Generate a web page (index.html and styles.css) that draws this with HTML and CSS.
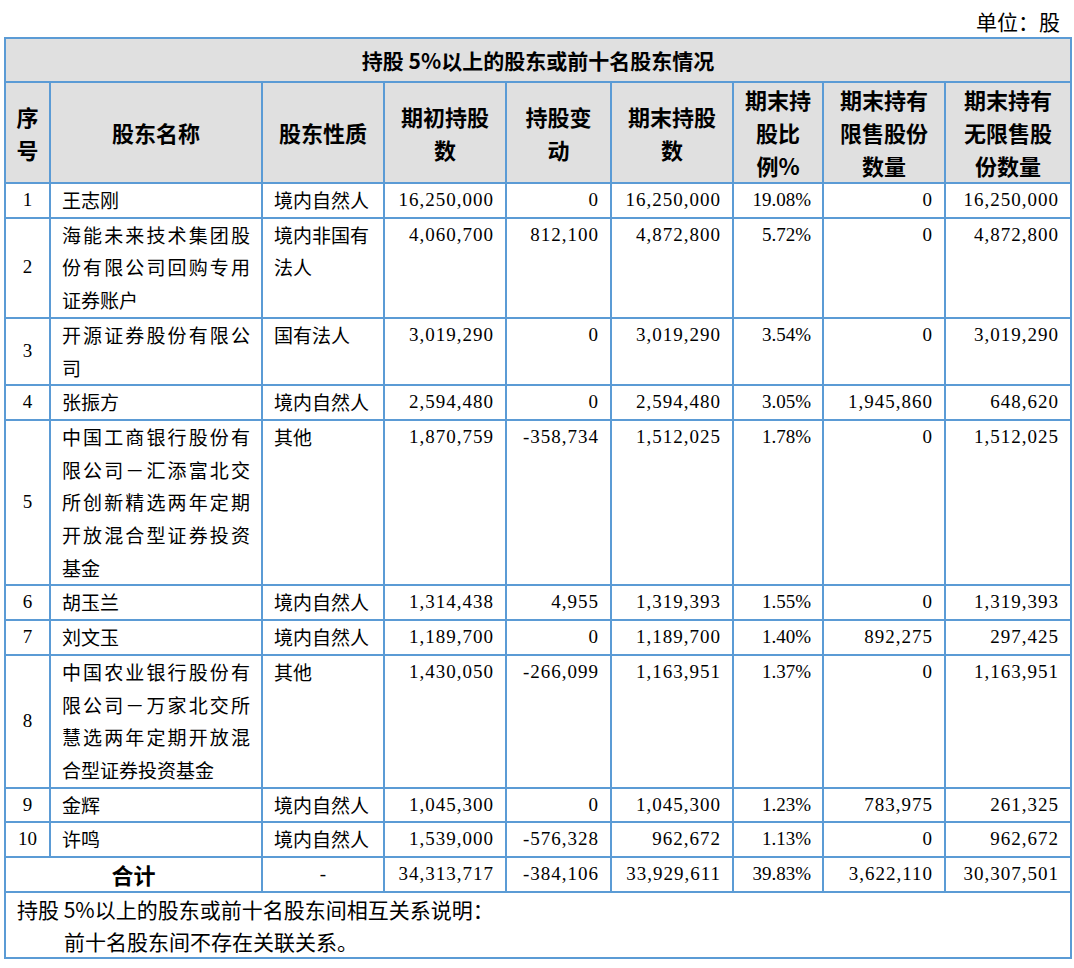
FILE: index.html
```html
<!DOCTYPE html>
<html lang="zh-CN">
<head>
<meta charset="utf-8">
<title>持股5%以上的股东或前十名股东情况</title>
<link rel="stylesheet" href="styles.css">
</head>
<body>
<div class="unit">单位：股</div>
<table class="tbl">
  <colgroup>
    <col class="c1"><col class="c2"><col class="c3"><col class="c4"><col class="c5"><col class="c6"><col class="c7"><col class="c8"><col class="c9">
  </colgroup>
  <thead>
    <tr><th class="title" colspan="9">持股 5%以上的股东或前十名股东情况</th></tr>
    <tr class="head">
      <th>序号</th>
      <th>股东名称</th>
      <th>股东性质</th>
      <th>期初持股数</th>
      <th>持股变动</th>
      <th>期末持股数</th>
      <th>期末持股比例%</th>
      <th>期末持有限售股份数量</th>
      <th>期末持有无限售股份数量</th>
    </tr>
  </thead>
  <tbody>
    <tr><td class="seq">1</td><td class="name">王志刚</td><td class="kind">境内自然人</td><td class="num">16,250,000</td><td class="num">0</td><td class="num">16,250,000</td><td class="pct">19.08%</td><td class="num">0</td><td class="num">16,250,000</td></tr>
    <tr><td class="seq">2</td><td class="name">海能未来技术集团股份有限公司回购专用证券账户</td><td class="kind">境内非国有法人</td><td class="num">4,060,700</td><td class="num">812,100</td><td class="num">4,872,800</td><td class="pct">5.72%</td><td class="num">0</td><td class="num">4,872,800</td></tr>
    <tr><td class="seq">3</td><td class="name">开源证券股份有限公司</td><td class="kind">国有法人</td><td class="num">3,019,290</td><td class="num">0</td><td class="num">3,019,290</td><td class="pct">3.54%</td><td class="num">0</td><td class="num">3,019,290</td></tr>
    <tr><td class="seq">4</td><td class="name">张振方</td><td class="kind">境内自然人</td><td class="num">2,594,480</td><td class="num">0</td><td class="num">2,594,480</td><td class="pct">3.05%</td><td class="num">1,945,860</td><td class="num">648,620</td></tr>
    <tr><td class="seq">5</td><td class="name">中国工商银行股份有限公司－汇添富北交所创新精选两年定期开放混合型证券投资基金</td><td class="kind">其他</td><td class="num">1,870,759</td><td class="num">-358,734</td><td class="num">1,512,025</td><td class="pct">1.78%</td><td class="num">0</td><td class="num">1,512,025</td></tr>
    <tr><td class="seq">6</td><td class="name">胡玉兰</td><td class="kind">境内自然人</td><td class="num">1,314,438</td><td class="num">4,955</td><td class="num">1,319,393</td><td class="pct">1.55%</td><td class="num">0</td><td class="num">1,319,393</td></tr>
    <tr><td class="seq">7</td><td class="name">刘文玉</td><td class="kind">境内自然人</td><td class="num">1,189,700</td><td class="num">0</td><td class="num">1,189,700</td><td class="pct">1.40%</td><td class="num">892,275</td><td class="num">297,425</td></tr>
    <tr><td class="seq">8</td><td class="name">中国农业银行股份有限公司－万家北交所慧选两年定期开放混合型证券投资基金</td><td class="kind">其他</td><td class="num">1,430,050</td><td class="num">-266,099</td><td class="num">1,163,951</td><td class="pct">1.37%</td><td class="num">0</td><td class="num">1,163,951</td></tr>
    <tr><td class="seq">9</td><td class="name">金辉</td><td class="kind">境内自然人</td><td class="num">1,045,300</td><td class="num">0</td><td class="num">1,045,300</td><td class="pct">1.23%</td><td class="num">783,975</td><td class="num">261,325</td></tr>
    <tr><td class="seq">10</td><td class="name">许鸣</td><td class="kind">境内自然人</td><td class="num">1,539,000</td><td class="num">-576,328</td><td class="num">962,672</td><td class="pct">1.13%</td><td class="num">0</td><td class="num">962,672</td></tr>
    <tr class="total"><td class="sum" colspan="2">合计</td><td class="dash">-</td><td class="num">34,313,717</td><td class="num">-384,106</td><td class="num">33,929,611</td><td class="pct">39.83%</td><td class="num">3,622,110</td><td class="num">30,307,501</td></tr>
    <tr><td class="note" colspan="9"><div>持股 5%以上的股东或前十名股东间相互关系说明：</div><div class="indent">前十名股东间不存在关联关系。</div></td></tr>
  </tbody>
</table>
</body>
</html>
```
FILE: styles.css
```css
body {
  margin: 0;
  background: #ffffff;
  color: #000000;
  font-family: "Noto Sans CJK SC", sans-serif;
}

.unit {
  height: 37px;
  box-sizing: border-box;
  padding: 5px 14px 0 0;
  text-align: right;
  font-size: 21px;
  line-height: 33px;
}

.tbl {
  margin-left: 4px;
  width: 1068px;
  table-layout: fixed;
  border-collapse: separate;
  border-spacing: 0;
  border-top: 2px solid #5b9bd5;
  border-left: 2px solid #5b9bd5;
}

.c1 { width: 45px; }
.c2 { width: 212px; }
.c3 { width: 122px; }
.c4 { width: 122px; }
.c5 { width: 105px; }
.c6 { width: 122px; }
.c7 { width: 90px; }
.c8 { width: 122px; }
.c9 { width: 126px; }

.tbl th,
.tbl td {
  border-right: 2px solid #5b9bd5;
  border-bottom: 2px solid #5b9bd5;
  padding: 0 11px;
  font-size: 19px;
  line-height: 32.7px;
  vertical-align: top;
  font-weight: normal;
}

.tbl th {
  background: #e0e0e0;
  font-weight: bold;
  text-align: center;
  vertical-align: middle;
}

.tbl .title {
  font-size: 21px;
  line-height: 42px;
}

.head th {
  font-size: 22px;
  line-height: 33px;
  padding: 0 8px;
}

.seq {
  text-align: center;
  vertical-align: middle;
  font-family: "Liberation Serif", serif;
  padding: 0 4px;
}

.tbl td.seq { vertical-align: middle; padding: 0 4px; }

.name {
  text-align: justify;
}

.kind {
  text-align: left;
}

.num,
.pct {
  text-align: right;
  white-space: nowrap;
  font-family: "Liberation Serif", serif;
}

.num {
  letter-spacing: 1px;
}

.tbl td.sum {
  text-align: center;
  vertical-align: middle;
  font-weight: bold;
  font-size: 22px;
}

.tbl td.dash {
  text-align: center;
  font-family: "Liberation Serif", serif;
}

.tbl td.note {
  font-size: 21px;
  line-height: 32px;
  padding: 0 11px;
}

.indent {
  padding-left: 47px;
}
```
